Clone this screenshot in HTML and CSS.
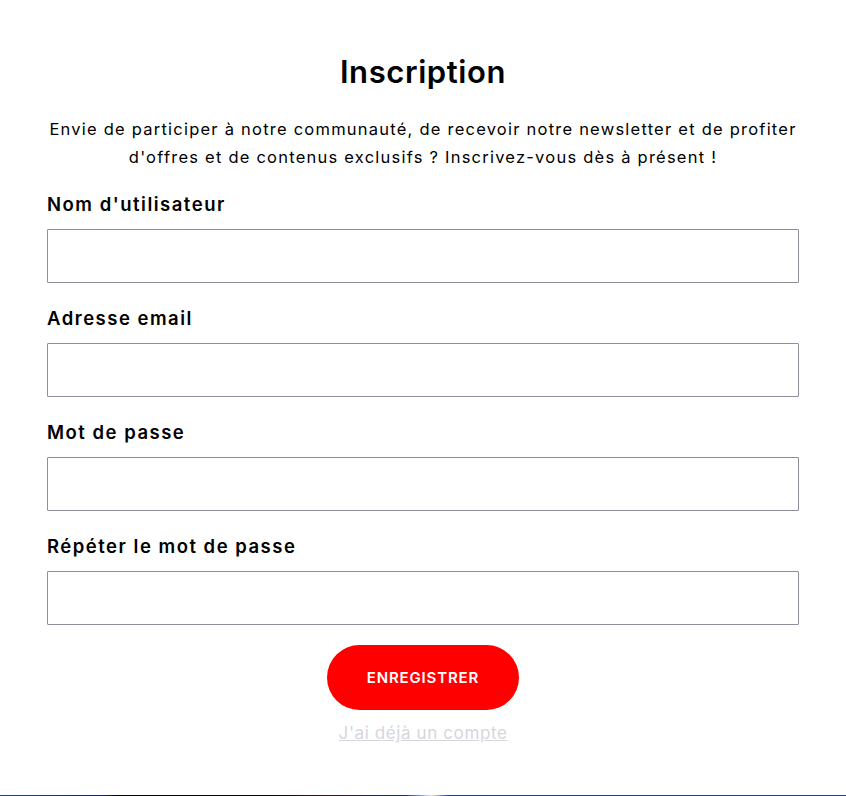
FILE: index.html
```html
<!DOCTYPE html>
<html lang="fr">
<head>
<meta charset="utf-8">
<title>Inscription</title>
<link rel="stylesheet" href="styles.css">
</head>
<body>
<main class="page">
  <form class="signup">
    <h1 class="title">Inscription</h1>
    <p class="intro">Envie de participer à notre communauté, de recevoir notre newsletter et de profiter<br>d'offres et de contenus exclusifs ? Inscrivez-vous dès à présent !</p>
    <div class="field">
      <label class="label" for="u">Nom d'utilisateur</label>
      <input class="input" id="u" type="text">
    </div>
    <div class="field">
      <label class="label" for="e">Adresse email</label>
      <input class="input" id="e" type="email">
    </div>
    <div class="field">
      <label class="label" for="p">Mot de passe</label>
      <input class="input" id="p" type="password">
    </div>
    <div class="field">
      <label class="label" for="p2">Répéter le mot de passe</label>
      <input class="input" id="p2" type="password">
    </div>
    <div class="actions">
      <button class="btn" type="button">ENREGISTRER</button>
      <a class="link" href="#">J'ai déjà un compte</a>
    </div>
  </form>
</main>
<div class="bottom-strip"></div>
</body>
</html>
```
FILE: styles.css
```css
html, body {
  margin: 0;
  padding: 0;
  background: #fff;
}
body {
  font-family: Inter, "Open Sans", sans-serif;
  color: #000;
  height: 796px;
  display: flex;
  flex-direction: column;
  overflow: hidden;
}
.page {
  flex: 1;
  display: flex;
  justify-content: center;
}
.signup {
  width: 752px;
  display: flex;
  flex-direction: column;
  padding-top: 50px;
}
.title {
  margin: 0;
  text-align: center;
  font-size: 31px;
  font-weight: 600;
  line-height: 44px;
  letter-spacing: 0.6px;
}
.intro {
  margin: 21px 0 0;
  text-align: center;
  font-size: 16.5px;
  line-height: 28px;
  letter-spacing: 1.23px;
  white-space: nowrap;
}
.field {
  display: flex;
  flex-direction: column;
  margin-top: 20px;
}
.field + .field {
  margin-top: 22px;
}
.label {
  font-size: 18.5px;
  font-weight: 600;
  line-height: 26px;
  letter-spacing: 1.5px;
  margin-bottom: 12px;
}
.input {
  box-sizing: border-box;
  height: 54px;
  width: 100%;
  border: 1px solid #8e8d9b;
  border-radius: 1px;
  margin: 0;
  padding: 0 12px;
  font: inherit;
  background: #fff;
}
.actions {
  display: flex;
  flex-direction: column;
  align-items: center;
  margin-top: 20px;
}
.btn {
  width: 192px;
  height: 65px;
  border: 0;
  border-radius: 33px;
  background: #ff0000;
  color: #fff;
  font-family: inherit;
  font-size: 15px;
  font-weight: 600;
  letter-spacing: 0.85px;
}
.link {
  margin-top: 11px;
  color: #d6d6dd;
  font-size: 17px;
  line-height: 24px;
  letter-spacing: 0.6px;
  text-decoration: underline;
}
.bottom-strip {
  height: 1px;
  background: linear-gradient(90deg, #1d3fc0 0%, #0a1ea8 12%, #050505 14%, #0a0a0a 32%, #2a1b24 40%, #1a2aa0 48%, #e0e6ff 51%, #1535c8 53%, #1a3ad0 100%);
}
```
